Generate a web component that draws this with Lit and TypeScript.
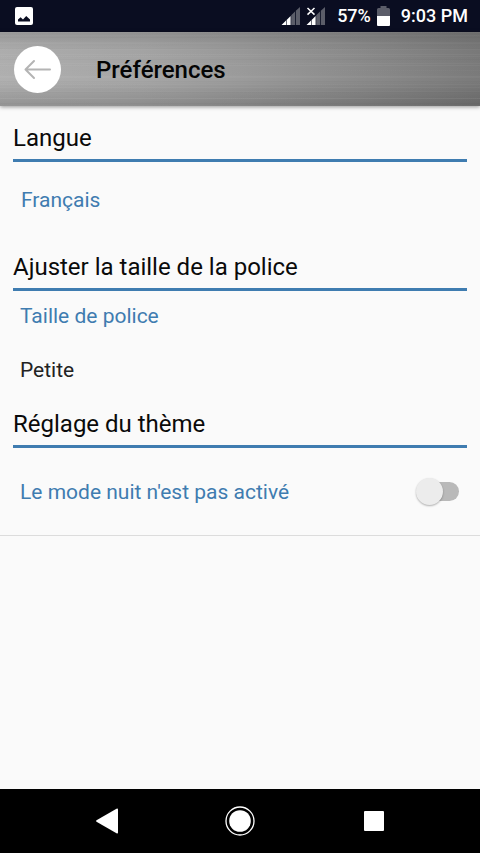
import { LitElement, html, css } from "lit";
import { customElement, state } from "lit/decorators.js";

@customElement("status-bar")
class StatusBar extends LitElement {
  static styles = css`
    :host {
      display: flex;
      align-items: center;
      height: 32px;
      padding: 0 12px 0 15px;
      background: #0a0d21;
      color: #fff;
      font-size: 18px;
      font-weight: 500;
      line-height: 34px;
      white-space: nowrap;
    }
    svg {
      display: block;
      flex: none;
    }
    .spacer {
      flex: 1;
    }
    .signal {
      margin-right: 6px;
    }
    .charge {
      margin: 0 11px 0 6px;
    }
    .percent {
      margin-left: 12px;
    }
  `;

  render() {
    return html`
      <svg width="18" height="18" viewBox="0 0 18 18" aria-hidden="true">
        <rect width="18" height="18" rx="2" fill="#fff" />
        <path d="M3 14.5V12.6L5.6 10.3L8 12.4L11.2 9L15 12.6V14.5Z" fill="#0a0d21" />
      </svg>
      <span class="spacer"></span>
      <svg class="signal" width="19" height="20" viewBox="0 0 19 20" aria-hidden="true">
        <path d="M0.5 19L5 14.5V19Z M5.6 14L9.6 10V19H5.6Z" fill="#fff" />
        <path d="M10.2 9.3L14 5.6V19H10.2Z M14.8 4.8L19 1V19H14.8Z" fill="#5b5d69" />
      </svg>
      <svg width="19" height="20" viewBox="0 0 19 20" aria-hidden="true">
        <path d="M0.5 19L5 14.5V19Z M5.6 14L9.6 10V19H5.6Z" fill="#fff" />
        <path d="M10.2 9.3L14 5.6V19H10.2Z M14.8 4.8L19 1V19H14.8Z" fill="#5b5d69" />
        <path d="M1.5 2L8.5 8.6M8.5 2L1.5 8.6" stroke="#fff" stroke-width="1.5" />
      </svg>
      <span class="percent">57%</span>
      <svg class="charge" width="13" height="20" viewBox="0 0 13 20" aria-hidden="true">
        <path d="M0 10V3.5Q0 2 1.5 2H3.5V0H9.5V2H11.5Q13 2 13 3.5V10Z" fill="#5b5d69" />
        <path d="M0 10H13V19Q13 20 12 20H1Q0 20 0 19Z" fill="#fff" />
      </svg>
      <span>9:03 PM</span>
    `;
  }
}

@customElement("app-header")
class AppHeader extends LitElement {
  static styles = css`
    :host {
      display: flex;
      align-items: center;
      gap: 35px;
      height: 74px;
      padding: 0 14px;
      background:
        repeating-linear-gradient(
          rgba(255, 255, 255, 0.04) 0 1px,
          transparent 1px 5px,
          rgba(0, 0, 0, 0.02) 5px 6px,
          transparent 6px 11px
        ),
        repeating-linear-gradient(
          transparent 0 3px,
          rgba(255, 255, 255, 0.03) 3px 4px,
          transparent 4px 7px
        ),
        linear-gradient(
          rgba(0, 0, 0, 0.14),
          rgba(0, 0, 0, 0.02) 25%,
          transparent 65%,
          rgba(0, 0, 0, 0.16)
        ),
        linear-gradient(95deg, #b0b0b0, #a6a6a6 30%, #9b9b9b 50%, #8b8b8b 75%, #7a7a7a);
      box-shadow: 0 1px 4px rgba(0, 0, 0, 0.4);
    }
    .back {
      flex: none;
      width: 47px;
      height: 47px;
      padding: 0;
      border: 0;
      border-radius: 50%;
      background: #fff;
    }
    svg {
      display: block;
      margin: auto;
    }
    .title {
      margin: 0;
      padding-top: 2px;
      font-size: 24px;
      font-weight: 500;
      line-height: 32px;
      color: #050505;
    }
  `;

  render() {
    return html`
      <button class="back" aria-label="Retour">
        <svg width="47" height="47" viewBox="0 0 47 47" fill="none" stroke="#b4b4b4" stroke-width="2" stroke-linecap="round" stroke-linejoin="round">
          <path d="M36 23.5H11.5M20 15L11.5 23.5L20 32" />
        </svg>
      </button>
      <h1 class="title">Préférences</h1>
    `;
  }
}

@customElement("nav-bar")
class NavBar extends LitElement {
  static styles = css`
    :host {
      display: flex;
      justify-content: center;
      align-items: center;
      height: 64px;
      background: #000;
    }
    .key {
      display: flex;
      justify-content: center;
      align-items: center;
      width: 28%;
      height: 64px;
      padding: 0;
      border: 0;
      background: none;
    }
  `;

  render() {
    return html`
      <button class="key" aria-label="Précédent">
        <svg width="24" height="26" viewBox="0 0 24 26">
          <path d="M2.5 12.2L22.5 0.8Q24 0.2 24 1.6V24.4Q24 25.8 22.5 25.2L2.5 13.8Q1.5 13 2.5 12.2Z" fill="#fff" />
        </svg>
      </button>
      <button class="key" aria-label="Accueil">
        <svg width="30" height="30" viewBox="0 0 30 30">
          <circle cx="15" cy="15" r="14" fill="none" stroke="#fff" stroke-width="1.3" />
          <circle cx="15" cy="15" r="10.8" fill="#fff" />
        </svg>
      </button>
      <button class="key" aria-label="Applications récentes">
        <svg width="20" height="20" viewBox="0 0 20 20">
          <rect width="20" height="20" rx="1" fill="#fff" />
        </svg>
      </button>
    `;
  }
}

@customElement("app-root")
class AppRoot extends LitElement {
  static styles = css`
    :host {
      display: flex;
      flex-direction: column;
      min-height: 100vh;
      background: #fafafa;
      font-family: Roboto, "Liberation Sans", sans-serif;
    }
    .content {
      flex: 1;
      padding-top: 16px;
    }
    .heading {
      margin: 0 13px;
      padding-bottom: 5px;
      border-bottom: 3px solid #3f7cb0;
      font-size: 24px;
      font-weight: 400;
      line-height: 32px;
      color: #0a0a0a;
    }
    .item {
      display: flex;
      flex-direction: column;
      gap: 24px;
      width: 100%;
      padding: 10px 20px 23px;
      border: 0;
      background: none;
      font: inherit;
      font-size: 21px;
      line-height: 30px;
      text-align: left;
      color: #3f7cb0;
    }
    .item.language {
      padding: 23px 21px 36px;
    }
    .value {
      color: #222;
    }
    .theme {
      display: flex;
      align-items: center;
      justify-content: space-between;
      height: 87px;
      padding: 0 21px 0 20px;
      border-bottom: 1px solid #dcdcdc;
      font-size: 21px;
      line-height: 32px;
      color: #3f7cb0;
    }
    .switch {
      appearance: none;
      display: flex;
      align-items: center;
      flex: none;
      width: 43px;
      height: 28px;
      margin: 0;
      padding-left: 8px;
      box-sizing: border-box;
      position: relative;
    }
    .switch::before {
      content: "";
      flex: 1;
      height: 19px;
      border-radius: 10px;
      background: #b9b9b9;
    }
    .switch::after {
      content: "";
      position: absolute;
      left: 0;
      top: 0;
      width: 27px;
      height: 27px;
      border-radius: 50%;
      background: #ececec;
      box-shadow: 0 1px 2px rgba(0, 0, 0, 0.3);
    }
    .switch:checked::after {
      left: auto;
      right: 0;
      background: #3f7cb0;
    }
  `;

  @state() private night = false;

  render() {
    return html`
      <status-bar></status-bar>
      <app-header></app-header>
      <main class="content">
        <h2 class="heading">Langue</h2>
        <button class="item language">Français</button>
        <h2 class="heading">Ajuster la taille de la police</h2>
        <button class="item">
          <span>Taille de police</span>
          <span class="value">Petite</span>
        </button>
        <h2 class="heading">Réglage du thème</h2>
        <div class="theme">
          <label for="night">${this.night ? "Le mode nuit est activé" : "Le mode nuit n'est pas activé"}</label>
          <input
            id="night"
            class="switch"
            type="checkbox"
            role="switch"
            .checked=${this.night}
            @change=${(e: Event) => (this.night = (e.target as HTMLInputElement).checked)}
          />
        </div>
      </main>
      <nav-bar></nav-bar>
    `;
  }
}
